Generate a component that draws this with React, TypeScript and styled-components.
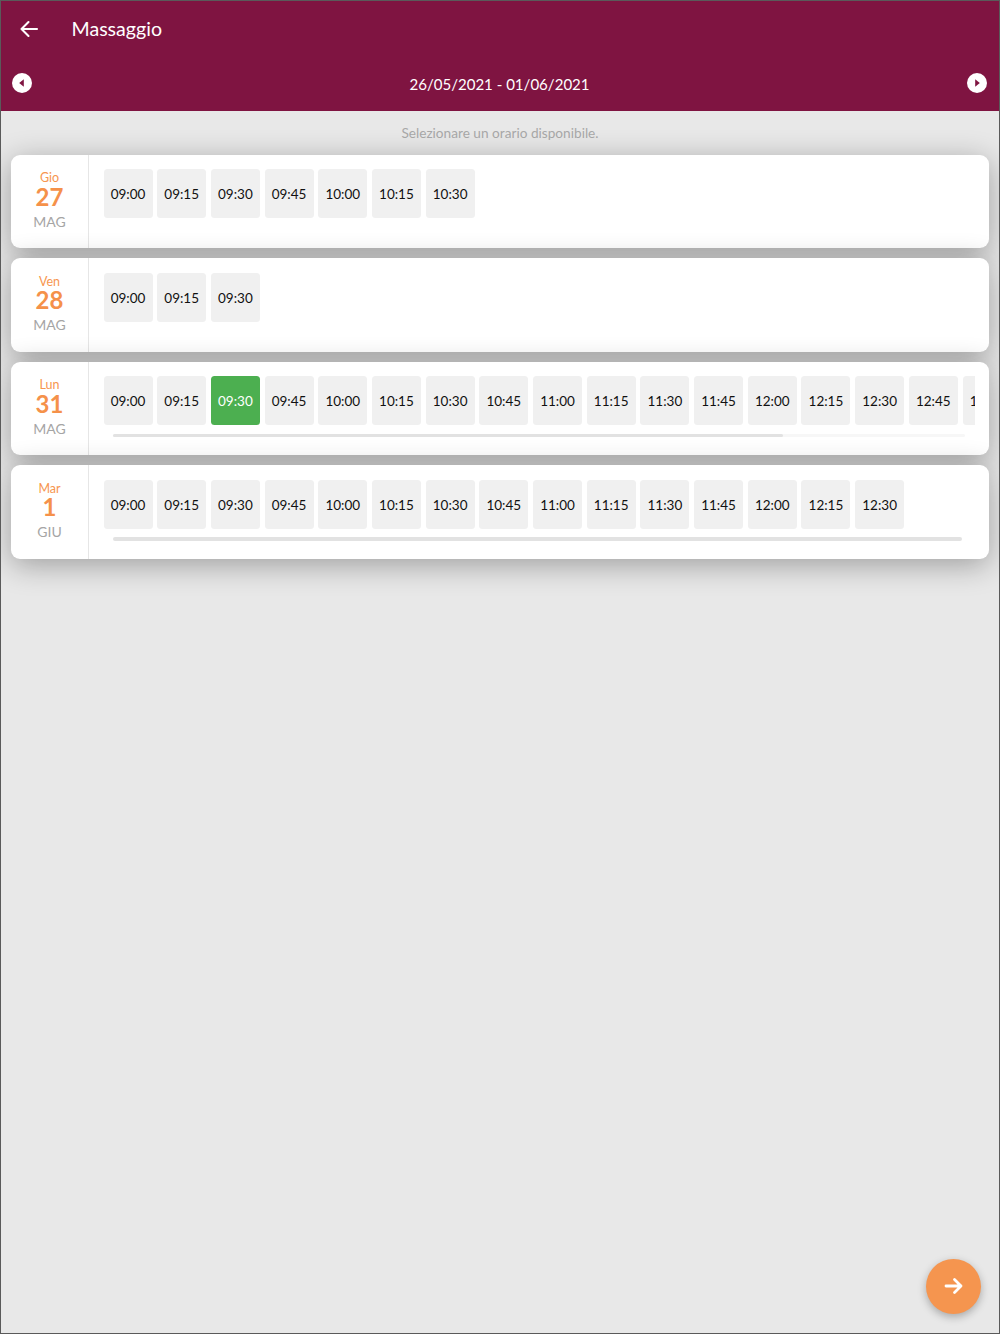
import React from "react";
import styled, { createGlobalStyle } from "styled-components";

const Global = createGlobalStyle`
  html, body { margin: 0; padding: 0; height: 100%; }
  body { font-family: Lato, "Liberation Sans", sans-serif; background: #e8e8e8; }
  * { box-sizing: border-box; }
`;

const Screen = styled.div`
  position: relative;
  width: 1000px;
  height: 1334px;
  border: 1px solid #5a5a5a;
  border-width: 1px 1px 1.5px 1.5px;
  background: #e8e8e8;
  overflow: hidden;
`;

const Header = styled.header`
  height: 109.5px;
  background: #7f1441;
  color: #fff;
  display: flex;
  flex-direction: column;
`;

const TitleBar = styled.div`
  height: 55px;
  display: flex;
  align-items: center;
  padding-left: 15px;
`;

const BackButton = styled.span`
  width: 26px;
  height: 26px;
  display: flex;
  color: #fff;
`;

const Title = styled.h1`
  margin: 0 0 0 29.5px;
  font-size: 19.6px;
  font-weight: 400;
`;

const DateBar = styled.div`
  flex: 1;
  display: flex;
  align-items: center;
  justify-content: space-between;
  padding: 0 12px 1px 11px;
`;

const DateRange = styled.span`
  font-size: 15.05px;
  padding-top: 2px;
`;

const RoundIcon = styled.span`
  width: 20px;
  height: 20px;
  display: flex;
`;

const Hint = styled.p`
  margin: 0;
  height: 44px;
  padding-top: 14px;
  text-align: center;
  font-size: 13.65px;
  line-height: 17px;
  color: #a8a8a8;
`;

const List = styled.div`
  display: flex;
  flex-direction: column;
  gap: 10px;
  padding: 0 10px 0 9.5px;
`;

const Card = styled.section`
  height: 93.5px;
  display: flex;
  background: #fff;
  border-radius: 9px;
  box-shadow: 0 6px 30px rgba(0, 0, 0, 0.32);
`;

const DateCol = styled.div`
  flex: 0 0 78px;
  border-right: 1px solid #e6e6e6;
  display: flex;
  flex-direction: column;
  align-items: center;
  padding: 16.5px 0 0 1px;
`;

const Weekday = styled.span`
  font-size: 12.5px;
  line-height: 14px;
  color: #f7964f;
`;

const DayNum = styled.span`
  margin-top: -0.5px;
  font-size: 24px;
  font-weight: 700;
  line-height: 24px;
  color: #f5914a;
`;

const Month = styled.span`
  margin-top: 4px;
  font-size: 14px;
  line-height: 17px;
  color: #a5a5a5;
`;

const Slots = styled.div`
  flex: 1;
  min-width: 0;
  padding: 14.5px 14px 0 15px;
`;

const Chips = styled.div`
  display: flex;
  gap: 4.7px;
  overflow: hidden;
`;

const Chip = styled.span<{ $active?: boolean }>`
  flex: 0 0 49px;
  height: 49px;
  padding-top: 1px;
  border-radius: 3.5px;
  display: flex;
  align-items: center;
  justify-content: center;
  font-size: 13.5px;
  background: ${(p) => (p.$active ? "#4caf50" : "#f0f0f0")};
  color: ${(p) => (p.$active ? "#fff" : "#111")};
`;

const ScrollTrack = styled.div<{ $faint?: boolean }>`
  margin: 8.5px 10px 0 9px;
  height: 3.5px;
  border-radius: 2px;
  background: ${(p) => (p.$faint ? "#f7f7f7" : "#fff")};
`;

const ScrollThumb = styled.div`
  height: 100%;
  border-radius: 2px;
  background: #e2e2e2;
`;

const Fab = styled.button`
  position: absolute;
  right: 18px;
  bottom: 19.5px;
  width: 55px;
  height: 55px;
  padding: 0;
  border: 0;
  border-radius: 50%;
  background: #f5954f;
  color: #fff;
  display: flex;
  align-items: center;
  justify-content: center;
  box-shadow: 0 3px 8px rgba(0, 0, 0, 0.28);
`;

const times = ["09:00","09:15","09:30","09:45","10:00","10:15","10:30","10:45","11:00","11:15","11:30","11:45","12:00","12:15","12:30","12:45","13:00"];

const days = [
  { wd: "Gio", num: "27", mon: "MAG", count: 7 },
  { wd: "Ven", num: "28", mon: "MAG", count: 3 },
  { wd: "Lun", num: "31", mon: "MAG", count: 17, active: 2, thumb: 78.6, faint: true },
  { wd: "Mar", num: "1", mon: "GIU", count: 15, thumb: 99.7 },
];

const Chevron = ({ dir }: { dir: "l" | "r" }) => (
  <svg width="20" height="20" viewBox="0 0 20 20">
    <circle cx="10" cy="10" r="10" fill="#fff" />
    <path d={dir === "l" ? "M11.8 6.2v7.6L7.2 10z" : "M8.2 6.2v7.6L12.8 10z"} fill="#7f1441" />
  </svg>
);

export default function App() {
  return (
    <Screen>
      <Global />
      <Header>
        <TitleBar>
          <BackButton>
            <svg width="26" height="26" viewBox="0 0 26 26" fill="none" stroke="currentColor" strokeWidth="2.1" strokeLinecap="round" strokeLinejoin="round">
              <path d="M5.5 13h15.5M12.5 6 5.5 13l7 7" />
            </svg>
          </BackButton>
          <Title>Massaggio</Title>
        </TitleBar>
        <DateBar>
          <RoundIcon><Chevron dir="l" /></RoundIcon>
          <DateRange>26/05/2021 - 01/06/2021</DateRange>
          <RoundIcon><Chevron dir="r" /></RoundIcon>
        </DateBar>
      </Header>
      <Hint>Selezionare un orario disponibile.</Hint>
      <List>
        {days.map((d) => (
          <Card key={d.num}>
            <DateCol>
              <Weekday>{d.wd}</Weekday>
              <DayNum>{d.num}</DayNum>
              <Month>{d.mon}</Month>
            </DateCol>
            <Slots>
              <Chips>
                {times.slice(0, d.count).map((t, i) => (
                  <Chip key={t} $active={i === d.active}>{t}</Chip>
                ))}
              </Chips>
              {d.thumb && (
                <ScrollTrack $faint={d.faint}>
                  <ScrollThumb style={{ width: `${d.thumb}%` }} />
                </ScrollTrack>
              )}
            </Slots>
          </Card>
        ))}
      </List>
      <Fab aria-label="Avanti">
        <svg width="22" height="22" viewBox="0 0 22 22" fill="none" stroke="currentColor" strokeWidth="2.8" strokeLinecap="round" strokeLinejoin="round">
          <path d="M3 11h15M11.5 4.5 18 11l-6.5 6.5" />
        </svg>
      </Fab>
    </Screen>
  );
}
